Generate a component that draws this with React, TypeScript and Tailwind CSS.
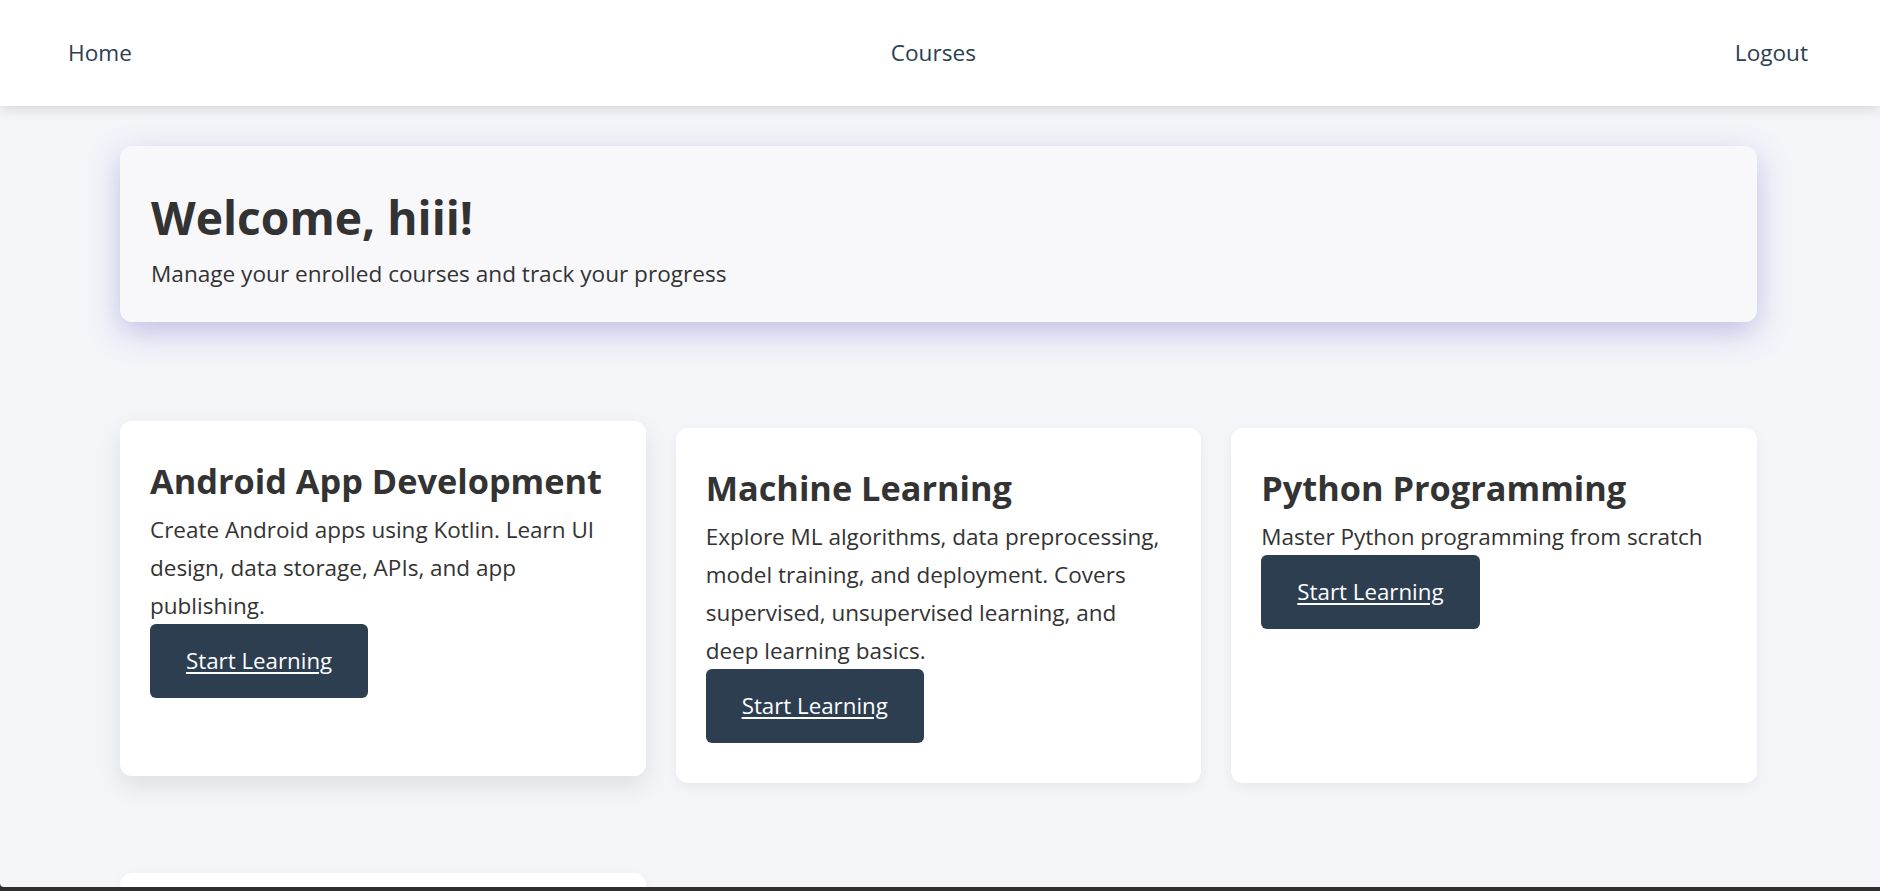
import React from "react";

type Course = { title: string; lines: string[]; hovered?: boolean };

const courses: Course[] = [
  {
    title: "Android App Development",
    lines: ["Create Android apps using Kotlin. Learn UI", "design, data storage, APIs, and app", "publishing."],
    hovered: true,
  },
  {
    title: "Machine Learning",
    lines: [
      "Explore ML algorithms, data preprocessing,",
      "model training, and deployment. Covers",
      "supervised, unsupervised learning, and",
      "deep learning basics.",
    ],
  },
  {
    title: "Python Programming",
    lines: ["Master Python programming from scratch"],
  },
];

function CourseCard({ course }: { course: Course }) {
  return (
    <div
      className={
        course.hovered
          ? "bg-white rounded-[12px] pt-[30px] pb-[40px] pl-[30px] pr-[20px] -translate-y-[7px] shadow-[0_10px_24px_rgba(0,0,0,0.09)]"
          : "bg-white rounded-[12px] pt-[30px] pb-[40px] pl-[30px] pr-[20px] shadow-[0_4px_12px_rgba(0,0,0,0.05)]"
      }
    >
      <h2 className="mt-[8px] text-[34.3px] leading-[44px] font-bold text-[#333333] whitespace-nowrap">
        {course.title}
      </h2>
      <p className="mt-[8px] text-[22.5px] leading-[38px] text-[#333333] whitespace-nowrap">
        {course.lines.map((l, i) => (
          <React.Fragment key={i}>
            {l}
            {i < course.lines.length - 1 ? <br /> : null}
          </React.Fragment>
        ))}
      </p>
      <a
        href="#"
        className="-mt-[1px] inline-flex h-[74px] items-center px-[36px] rounded-[6px] bg-[#2c3e50] text-white text-[22.3px] underline underline-offset-[3px]"
      >
        Start Learning
      </a>
    </div>
  );
}

export default function App() {
  return (
    <div
      className="h-[891px] flex flex-col bg-[#2e2e2e] overflow-hidden"
      style={{ fontFamily: '"Open Sans", "Noto Sans", sans-serif' }}
    >
      <div className="flex-1 min-h-0 overflow-hidden bg-[#f4f5f9] rounded-bl-[4px] flex flex-col">
        <nav className="relative z-10 h-[106px] shrink-0 bg-white flex items-center justify-between pl-[68px] pr-[72px] shadow-[0_3px_12px_rgba(0,0,0,0.12)] text-[22.6px] text-[#2c3e50]">
          <a href="#">Home</a>
          <a href="#">Courses</a>
          <a href="#">Logout</a>
        </nav>
        <main className="pt-[40px] ml-[120px] w-[1637px]">
          <section className="bg-[#f8f8fb] rounded-[12px] pt-[44px] pb-[32px] px-[31px] shadow-[0_10px_30px_rgba(90,92,190,0.34)]">
            <h1 className="text-[46.2px] leading-[56px] font-bold text-[#333333]">Welcome, hiii!</h1>
            <p className="mt-[12px] text-[22.6px] leading-[32px] text-[#333333]">
              Manage your enrolled courses and track your progress
            </p>
          </section>
          <div className="mt-[106px] grid grid-cols-3 gap-x-[30px] gap-y-[90px]">
            {courses.map((c) => (
              <CourseCard key={c.title} course={c} />
            ))}
            <div className="h-[355px] bg-white rounded-[12px] shadow-[0_4px_12px_rgba(0,0,0,0.05)]" />
          </div>
        </main>
      </div>
      <div className="h-[4px] shrink-0 bg-[#2e2e2e]" />
    </div>
  );
}
